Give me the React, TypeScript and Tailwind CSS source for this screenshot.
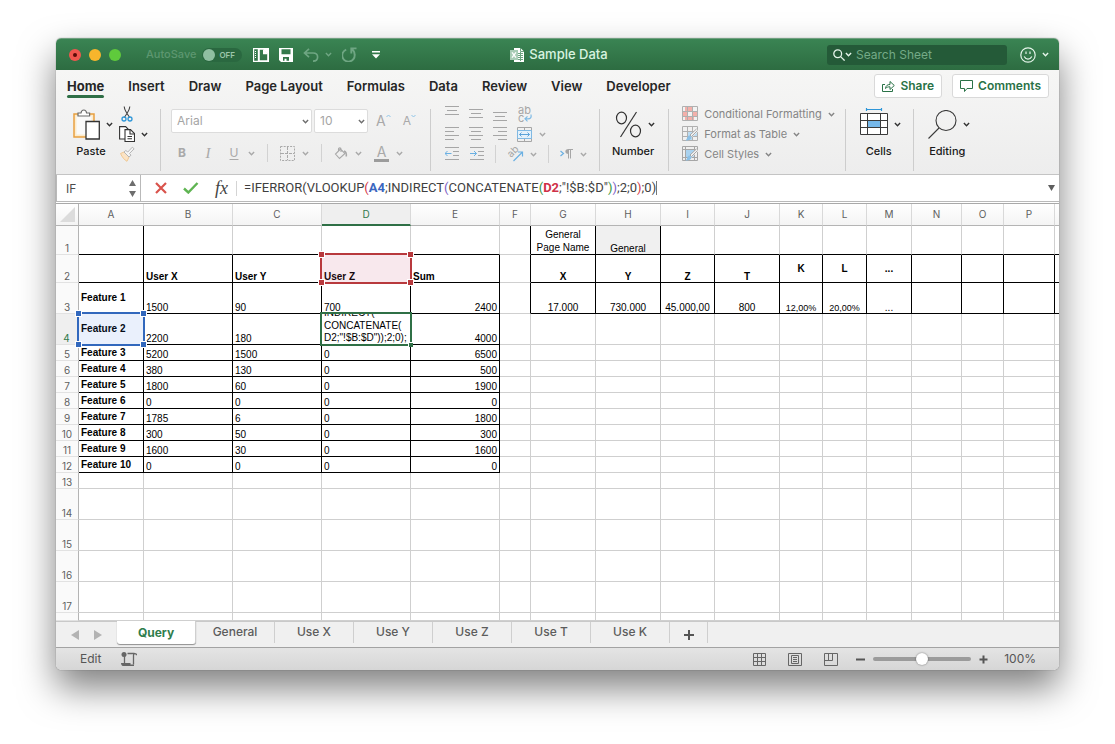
import React, { useState } from "react";

type CellData = {
  text?: string;
  bold?: boolean;
  align?: "left" | "center" | "right";
  valign?: "middle" | "bottom";
  small?: boolean;
  shaded?: boolean;
  wrap?: boolean;
};

const COLUMNS = [
  { name: "A", width: "w-[65px]" },
  { name: "B", width: "w-[89px]" },
  { name: "C", width: "w-[89px]" },
  { name: "D", width: "w-[89px]" },
  { name: "E", width: "w-[89px]" },
  { name: "F", width: "w-[31px]" },
  { name: "G", width: "w-[65px]" },
  { name: "H", width: "w-[65px]" },
  { name: "I", width: "w-[54px]" },
  { name: "J", width: "w-[65px]" },
  { name: "K", width: "w-[43px]" },
  { name: "L", width: "w-[44px]" },
  { name: "M", width: "w-[45px]" },
  { name: "N", width: "w-[50px]" },
  { name: "O", width: "w-[42px]" },
  { name: "P", width: "w-[51px]" },
  { name: "", width: "w-auto" },
];

const LAST_COL = COLUMNS.length - 1;

const ROW_HEIGHTS: Record<number, string> = {
  1: "h-[29px]",
  2: "h-7",
  3: "h-[31px]",
  4: "h-[31px]",
  14: "h-[31px]",
  15: "h-[31px]",
  16: "h-[31px]",
  17: "h-[31px]",
  18: "h-2",
};

const FEATURES: [string, string, string, string, string][] = [
  ["Feature 1", "1500", "90", "700", "2400"],
  ["Feature 2", "2200", "180", "", "4000"],
  ["Feature 3", "5200", "1500", "0", "6500"],
  ["Feature 4", "380", "130", "0", "500"],
  ["Feature 5", "1800", "60", "0", "1900"],
  ["Feature 6", "0", "0", "0", "0"],
  ["Feature 7", "1785", "6", "0", "1800"],
  ["Feature 8", "300", "50", "0", "300"],
  ["Feature 9", "1600", "30", "0", "1600"],
  ["Feature 10", "0", "0", "0", "0"],
];

const CELLS: Record<string, CellData> = {
  G1: { text: "General Page Name", align: "center", wrap: true },
  H1: { text: "General", align: "center", shaded: true },
  B2: { text: "User X", bold: true },
  C2: { text: "User Y", bold: true },
  D2: { text: "User Z", bold: true },
  E2: { text: "Sum", bold: true },
  G2: { text: "X", bold: true, align: "center" },
  H2: { text: "Y", bold: true, align: "center" },
  I2: { text: "Z", bold: true, align: "center" },
  J2: { text: "T", bold: true, align: "center" },
  K2: { text: "K", bold: true, align: "center", valign: "middle" },
  L2: { text: "L", bold: true, align: "center", valign: "middle" },
  M2: { text: "...", bold: true, align: "center", valign: "middle" },
  G3: { text: "17.000", align: "center" },
  H3: { text: "730.000", align: "center" },
  I3: { text: "45.000,00", align: "center" },
  J3: { text: "800", align: "center" },
  K3: { text: "12,00%", align: "center", small: true },
  L3: { text: "20,00%", align: "center", small: true },
  M3: { text: "...", align: "center" },
};

FEATURES.forEach(([name, x, y, z, sum], i) => {
  const row = i + 3;
  CELLS[`A${row}`] = { text: name, bold: true, valign: "middle" };
  CELLS[`B${row}`] = { text: x };
  CELLS[`C${row}`] = { text: y };
  CELLS[`D${row}`] = { text: z };
  CELLS[`E${row}`] = { text: sum, align: "right" };
});

function rightBorder(col: number, row: number) {
  if (row === 1) return col === 0 || (col >= 5 && col <= 7);
  if (row === 2 || row === 3) return true;
  return row <= 12 && col <= 4;
}

function bottomBorder(col: number, row: number) {
  if (row > 12) return false;
  if (col <= 4) return true;
  return col >= 6 && row <= 3;
}

function Chevron({ className = "" }: { className?: string }) {
  return (
    <svg viewBox="0 0 7 5" className={`h-[5px] w-[7px] shrink-0 ${className}`} fill="none" stroke="currentColor" strokeWidth="1.4" aria-hidden="true">
      <path d="M.9 .9 3.5 3.7 6.1 .9" />
    </svg>
  );
}

function Divider() {
  return <span className="mt-[7px] h-[62px] w-px shrink-0 bg-[#cdcdcd]" />;
}

function SmallDivider() {
  return <span className="h-[18px] w-px shrink-0 bg-[#d2d2d2]" />;
}

function BigButton({ label, children }: { label: string; children: React.ReactNode }) {
  return (
    <button type="button" className="flex flex-col items-center text-[#333]">
      <span className="flex h-10 items-center gap-[6px]">
        {children}
        <Chevron />
      </span>
      <span className="pr-1 text-[11px] leading-[14px] font-medium text-[#1a1a1a]">{label}</span>
    </button>
  );
}

function Tool({ label, chevron, children }: { label: string; chevron?: boolean; children: React.ReactNode }) {
  return (
    <button type="button" aria-label={label} className="flex items-center gap-[7px] text-[#a9a9a9]">
      {children}
      {chevron && <Chevron />}
    </button>
  );
}

function Lines({ d }: { d: string }) {
  return (
    <svg viewBox="0 0 14 18" className="h-[18px] w-[14px]" fill="none" stroke="#a6a6a6" aria-hidden="true">
      <path d={d} />
    </svg>
  );
}

function TitleBar() {
  return (
    <header className="flex h-8 items-center rounded-t-[5px] border-t border-[#6f9f7f] bg-linear-to-b from-[#3a8453] to-[#2d6c41] text-white">
      <div className="flex flex-1 items-center pl-[13px]">
        <div className="flex gap-2">
          <button type="button" aria-label="Close" className="flex size-3 items-center justify-center rounded-full bg-[#f0564e]">
            <span className="size-1 rounded-full bg-[#5c0a06]" />
          </button>
          <button type="button" aria-label="Minimize" className="size-3 rounded-full bg-[#f8b52c]" />
          <button type="button" aria-label="Zoom" className="size-3 rounded-full bg-[#5fca3c]" />
        </div>
        <span className="ml-[25px] text-[11px] font-medium text-[#5d9770]">AutoSave</span>
        <button type="button" role="switch" aria-checked="false" aria-label="AutoSave" className="ml-[6px] flex h-[14px] w-10 items-center gap-1 rounded-full bg-[#2a6840] pl-px">
          <span className="size-3 rounded-full bg-[#8fbfa1]" />
          <span className="text-[8px] font-semibold text-[#9cc7ab]">OFF</span>
        </button>
        <div className="ml-[11px] flex items-center gap-[10px]">
          <button type="button" aria-label="Workbook gallery">
            <svg viewBox="0 0 16 14" className="h-[14px] w-4" aria-hidden="true">
              <path fill="#fff" fillRule="evenodd" d="M0 0h16v14H0zM1.200 1.300v11.400h3.600V1.300zM6.800 1.800v10.400h7.400V5.200L10.800 1.800z" />
              <path stroke="#fff" d="M2 3.500h1M2 5.500h1M2 7.500h1M2 9.500h1" />
              <path fill="#fff" d="M10 1.500h1.200L14.500 5v1.200H10z" />
            </svg>
          </button>
          <button type="button" aria-label="Save">
            <svg viewBox="0 0 14 14" className="size-[14px]" aria-hidden="true">
              <path fill="#fff" fillRule="evenodd" d="M0 0h14v14H2L0 12zM2.500 1.300v5h9v-5zM4 9v3.700h1.500v-2h2v2H10V9z" />
            </svg>
          </button>
          <button type="button" aria-label="Undo" className="flex items-center gap-[6px] text-[#6fa683]">
            <svg viewBox="0 0 16 14" className="h-[14px] w-4" fill="none" stroke="currentColor" strokeWidth="1.700" aria-hidden="true">
              <path d="M6 .8 1.500 5 6 9.200M1.700 5H10c2.700 0 4.600 1.600 4.600 4 0 2.200-1.700 4.100-4.600 4.100" />
            </svg>
            <Chevron />
          </button>
          <button type="button" aria-label="Redo" className="text-[#6fa683]">
            <svg viewBox="0 0 16 15" className="h-[15px] w-4" fill="none" stroke="currentColor" strokeWidth="1.900" aria-hidden="true">
              <path d="M4.200 2.600A6.200 6.200 0 1 0 12.600 7.500C12.600 5.300 11.600 3.300 9.700 2M9.300 6.500V1.400H14.500" />
            </svg>
          </button>
          <button type="button" aria-label="Customize toolbar" className="pl-1">
            <svg viewBox="0 0 8 8" className="size-2" fill="#fff" aria-hidden="true">
              <path d="M0 0h8v1.400H0zM0 3.200h8L4 7.500z" />
            </svg>
          </button>
        </div>
      </div>
      <h1 className="flex items-center gap-[5px] text-[13px] font-medium text-[#d8f3e0]">
        <svg viewBox="0 0 14 14" className="size-[14px]" aria-hidden="true">
          <path fill="#fff" d="M4 0h6.500L14 3.500V14H4z" />
          <path stroke="#6da581" fill="none" d="M8 5.500h5M8 7.500h5M8 9.500h5M8 11.500h5M10.500 4v9M10.500 0v3.500H14" />
          <path fill="#a9cdb6" d="M0 2h8v10H0z" />
          <path stroke="#fff" strokeWidth="1.300" fill="none" d="m2 4.300 4 5.400M6 4.300 2 9.700" />
        </svg>
        Sample Data
      </h1>
      <div className="flex flex-1 items-center justify-end gap-[13px] pr-[10px]">
        <label className="flex h-5 w-[180px] items-center gap-1 rounded-[3px] bg-[#245a38] pl-[6px]">
          <svg viewBox="0 0 12 12" className="size-3" fill="none" stroke="#e4f4e9" strokeWidth="1.300" aria-hidden="true">
            <circle cx="4.700" cy="4.700" r="3.900" />
            <path d="m7.600 7.600 4 4" />
          </svg>
          <Chevron className="-ml-1 size-[5px] text-[#e4f4e9]" />
          <input type="text" aria-label="Search Sheet" placeholder="Search Sheet" className="min-w-0 flex-1 bg-transparent text-[12px] text-white outline-none placeholder:text-[#74aa87]" />
        </label>
        <button type="button" aria-label="Feedback" className="flex items-center gap-[6px] text-[#e4f4e9]">
          <svg viewBox="0 0 16 16" className="size-4" fill="none" stroke="currentColor" strokeWidth="1.200" aria-hidden="true">
            <circle cx="8" cy="8" r="7.200" />
            <path d="M4.200 9.500c1.700 3.400 5.900 3.400 7.600 0M6 4.500v2.500M10 4.500v2.500" />
          </svg>
          <Chevron />
        </button>
      </div>
    </header>
  );
}

const MENUS = ["Home", "Insert", "Draw", "Page Layout", "Formulas", "Data", "Review", "View", "Developer"];

function MenuRow() {
  const [active, setActive] = useState("Home");
  return (
    <nav className="flex h-8 items-center justify-between pr-[10px] pl-[11px]">
      <div className="flex h-full items-center gap-6">
        {MENUS.map((m) => (
          <button
            key={m}
            type="button"
            onClick={() => setActive(m)}
            className={`relative text-[13px] leading-8 text-[#262626] ${m === active ? "font-bold" : "font-semibold"}`}
          >
            {m}
            {m === active && <span className="absolute inset-x-0 bottom-1 h-[3px] rounded-full bg-[#2f6f46]" />}
          </button>
        ))}
      </div>
      <div className="flex gap-[10px] text-[12px] font-semibold text-[#2a7247]">
        <button type="button" className="flex h-6 items-center gap-[5px] rounded-[3px] border border-[#d9d9d9] bg-white px-[7px]">
          <svg viewBox="0 0 13 12" className="h-3 w-[13px]" fill="none" stroke="currentColor" aria-hidden="true">
            <path d="M3 4.500H.5v7h10V9M3.500 8.500c.3-2.700 1.800-4 4.500-4v-3l4.300 4-4.300 4V6.800c-2 0-3.300.4-4.500 1.700z" />
          </svg>
          Share
        </button>
        <button type="button" className="flex h-6 items-center gap-[5px] rounded-[3px] border border-[#d9d9d9] bg-white px-[7px]">
          <svg viewBox="0 0 13 12" className="h-3 w-[13px]" fill="none" stroke="currentColor" aria-hidden="true">
            <path d="M.5 .5h12v8H7l-2.500 3v-3h-4z" />
          </svg>
          Comments
        </button>
      </div>
    </nav>
  );
}

function StyleIcon({ kind }: { kind: "conditional" | "table" | "cell" }) {
  return (
    <svg viewBox="0 0 16 16" className="size-4" fill="none" aria-hidden="true">
      {kind === "conditional" && <path fill="#f3b0aa" d="M3 1h7v4H3zM1 6h5v4H1zM10 6h5v4h-5zM3 11h9v4H3z" />}
      {kind === "table" && <path fill="#bcdcf2" d="M6 6h9v4H6zM6 10h5v5H6z" />}
      {kind === "cell" && <path fill="#a9d2ef" d="M3 4h10v8H3z" />}
      {kind === "cell" ? (
        <path stroke="#a6a6a6" d="M.5 .5h15v14H.5zM3.500 .5v14M12.500 .5v14M.5 3.500h15M.5 11.500h15" />
      ) : (
        <path stroke="#b0b0b0" d="M.5 .5h15v14H.5zM5.500 .5v14M10.500 .5v14M.5 5.500h15M.5 10.500h15" />
      )}
      {kind !== "conditional" && (
        <>
          <path stroke="#f1f1f1" strokeWidth="3" d="M15.500 4 8 11" />
          <path fill="#f4f4f4" stroke="#9e9e9e" strokeWidth=".9" d="m15.500 4.500-6 6-1.500-1.500 6.500-6" />
          <path fill="#8cc0e6" d="M7.800 9.300 9.600 11c-.4 2.700-2.500 3.700-6 3.500C5.300 13.200 5.100 9.600 7.800 9.300z" />
        </>
      )}
    </svg>
  );
}

function Ribbon() {
  return (
    <div className="flex h-[72px] items-start pl-[3px]">
      <div className="flex w-[101px] pt-[2px] pl-[14px]">
        <BigButton label="Paste">
          <svg viewBox="0 0 27 31" className="h-[31px] w-[27px]" fill="none" aria-hidden="true">
            <path fill="#fdeccd" stroke="#e8a040" strokeWidth="1.500" d="M1 5h20v23H1z" />
            <path fill="#fafafa" d="M3.500 7h15v18.500h-15z" />
            <path fill="#fff" stroke="#6b6b6b" strokeWidth="1.200" d="M5 7V4h3c.3-2 1.300-3 2.800-3s2.500 1 2.800 3h3v3z" />
            <path fill="#fff" stroke="#333" strokeWidth="1.300" d="M13 12.500h13.300v17.500H13z" />
          </svg>
        </BigButton>
        <div className="ml-[6px] flex flex-col text-[#333]">
          <button type="button" aria-label="Cut" className="flex h-5 items-center">
            <svg viewBox="0 0 16 16" className="size-4" fill="none" aria-hidden="true">
              <path stroke="#444" strokeWidth="1.100" d="M5.200 .5c.2 3 1.500 5.500 5.500 11M10.800 .5c-.2 3-1.500 5.500-5.500 11" />
              <circle cx="5" cy="13" r="2" stroke="#2e96d8" strokeWidth="1.300" />
              <circle cx="11" cy="13" r="2" stroke="#2e96d8" strokeWidth="1.300" />
            </svg>
          </button>
          <button type="button" aria-label="Copy" className="flex h-5 items-center gap-[6px]">
            <svg viewBox="0 0 16 16" className="size-4" fill="#fff" stroke="#333" strokeWidth="1.100" aria-hidden="true">
              <path d="M6 13H.6V.6h6L9 3v2" />
              <path d="M6 3.600h5.500l4 3.900v8H6z" />
              <path fill="none" d="M11 4v4h4M8.500 10.500h4.500M8.500 12.700h4.500" />
            </svg>
            <Chevron />
          </button>
          <button type="button" aria-label="Format painter" className="flex h-5 items-center">
            <svg viewBox="0 0 16 16" className="size-4" aria-hidden="true">
              <path fill="#fbe3c4" stroke="#efc893" d="M1.500 7.500 5 6l5 5-2 4.300C5.500 14 3 11 1.500 7.500z" />
              <path fill="#f5f5f5" stroke="#b5b5b5" d="m5 6 1.800-1.500 2 1.500 4.500-4.800 1.800 1.600L10.500 7.500l1.500 1.700L10 11z" />
            </svg>
          </button>
        </div>
      </div>
      <Divider />

      <div className="flex w-[269px] flex-col gap-[10px] pt-[7px] pl-[10px]">
        <div className="flex items-center gap-[2px]">
          <div className="relative flex">
            <select aria-label="Font" className="h-6 w-[141px] appearance-none rounded-[2px] border border-[#dcdcdc] bg-white pl-[5px] text-[12px] text-[#a5a5a5]">
              <option>Arial</option>
            </select>
            <Chevron className="pointer-events-none absolute top-[10px] right-[3px] text-[#6e6e6e]" />
          </div>
          <div className="relative flex">
            <select aria-label="Font size" className="h-6 w-[54px] appearance-none rounded-[2px] border border-[#dcdcdc] bg-white pl-[5px] text-[12px] text-[#a5a5a5]">
              <option>10</option>
            </select>
            <Chevron className="pointer-events-none absolute top-[10px] right-[3px] text-[#6e6e6e]" />
          </div>
          <div className="flex gap-3 pl-[6px]">
            <button type="button" aria-label="Increase font size" className="flex text-[14px] leading-5 text-[#a9a9a9]">
              A
              <svg viewBox="0 0 5 4" className="mt-[3px] h-1 w-[5px]" fill="none" stroke="#8ec5e8" aria-hidden="true">
                <path d="M.5 3 2.500 1l2 2" />
              </svg>
            </button>
            <button type="button" aria-label="Decrease font size" className="flex text-[12px] leading-5 text-[#a9a9a9]">
              A
              <svg viewBox="0 0 5 4" className="mt-[3px] h-1 w-[5px]" fill="none" stroke="#8ec5e8" aria-hidden="true">
                <path d="M.5 1 2.500 3l2-2" />
              </svg>
            </button>
          </div>
        </div>
        <div className="flex h-5 items-center gap-3 pl-1">
          <Tool label="Bold">
            <span className="w-[14px] text-center text-[12px] font-bold">B</span>
          </Tool>
          <Tool label="Italic">
            <span className="w-[14px] text-center font-['Liberation_Serif',serif] text-[15px] italic">I</span>
          </Tool>
          <Tool label="Underline" chevron>
            <span className="w-[14px] text-center text-[12px] underline underline-offset-2">U</span>
          </Tool>
          <SmallDivider />
          <Tool label="Borders" chevron>
            <svg viewBox="0 0 15 15" className="size-[15px]" fill="none" stroke="currentColor" aria-hidden="true">
              <path strokeDasharray="2 1.200" d="M.5 .5h14v14H.5z" />
              <path strokeDasharray="3 1" d="M7.500 1v13M1 7.500h13" />
            </svg>
          </Tool>
          <SmallDivider />
          <Tool label="Fill color" chevron>
            <svg viewBox="0 0 14 13" className="h-[13px] w-[14px]" fill="none" stroke="currentColor" strokeWidth="1.100" aria-hidden="true">
              <path d="M6.500 2 1.500 7l4 4.500 5.500-5L6.500 2zM4.500 5V2c0-1.500 2.500-1.500 2.500 0v3" />
              <path strokeWidth="1.600" d="M10 4c2 .5 2.600 2.500 2.300 5.500" />
            </svg>
          </Tool>
          <Tool label="Font color" chevron>
            <span className="flex w-[15px] flex-col items-center text-[14px] leading-[14px]">
              A
              <span className="h-[3px] w-[15px] bg-[#9c9c9c]" />
            </span>
          </Tool>
        </div>
      </div>
      <Divider />

      <div className="flex w-[168px] flex-col pt-[2px] pl-[14px]">
        <div className="flex h-5 items-center gap-[10px]">
          <Tool label="Align top"><Lines d="M0 1.500h14M2 5.500h10M0 9.500h14" /></Tool>
          <Tool label="Align middle"><Lines d="M0 4.500h14M2 8.500h10M0 12.500h14" /></Tool>
          <Tool label="Align bottom"><Lines d="M0 7.500h14M2 11.500h10M0 15.500h14" /></Tool>
          <Tool label="Wrap text">
            <svg viewBox="0 0 16 18" className="h-[18px] w-4 overflow-visible" fill="none" aria-hidden="true">
              <text x="1" y="9" fontSize="11" fill="#a6a6a6">ab</text>
              <text x="1" y="17" fontSize="11" fill="#a6a6a6">c</text>
              <path stroke="#7fbbe5" strokeWidth="1.200" d="M14 9.500c.6 3-.6 4.300-3 4.300H8M10.500 11.300 8 13.800l2.500 2.500" />
            </svg>
          </Tool>
        </div>
        <div className="flex h-5 items-center gap-[10px]">
          <Tool label="Align left"><Lines d="M0 2.500h14M0 6.500h9M0 10.500h14M0 14.500h9" /></Tool>
          <Tool label="Center"><Lines d="M0 2.500h14M2 6.500h10M0 10.500h14M2 14.500h10" /></Tool>
          <Tool label="Align right"><Lines d="M0 2.500h14M5 6.500h9M0 10.500h14M5 14.500h9" /></Tool>
          <Tool label="Merge" chevron>
            <svg viewBox="0 0 15 15" className="size-[15px]" fill="none" aria-hidden="true">
              <path stroke="#a6a6a6" d="M.5 .5h14v14H.5zM7.500 0v3M7.500 12v3" />
              <path fill="#e3f1fb" stroke="#7fb9e4" d="M.5 3.500h14v8H.5z" />
              <path stroke="#5ba3da" d="M2.500 7.500h10M4.500 5.500l-2 2 2 2M10.500 5.500l2 2-2 2" />
            </svg>
          </Tool>
        </div>
        <div className="flex h-5 items-center gap-[11px]">
          <Tool label="Decrease indent">
            <svg viewBox="0 0 14 14" className="size-[14px]" fill="none" stroke="#a6a6a6" aria-hidden="true">
              <path d="M0 .5h14M8 4.500h6M8 8.500h6M0 12.500h14" />
              <path stroke="#6bb0e2" d="M0 6.500h6.500M2.500 4 0 6.500 2.500 9" />
            </svg>
          </Tool>
          <Tool label="Increase indent">
            <svg viewBox="0 0 14 14" className="size-[14px]" fill="none" stroke="#a6a6a6" aria-hidden="true">
              <path d="M0 .5h14M8 4.500h6M8 8.500h6M0 12.500h14" />
              <path stroke="#6bb0e2" d="M0 6.500h6.500M4 4l2.500 2.500L4 9" />
            </svg>
          </Tool>
          <SmallDivider />
          <Tool label="Orientation" chevron>
            <svg viewBox="0 0 16 16" className="size-4 overflow-visible" fill="none" aria-hidden="true">
              <text x="0" y="0" fontSize="10" fill="#a6a6a6" transform="translate(4 12) rotate(-45)">ab</text>
              <path stroke="#6bb0e2" strokeWidth="1.200" d="M6.500 15 15.500 6M11 6h4.500V10.500" />
            </svg>
          </Tool>
          <SmallDivider />
          <Tool label="Text direction" chevron>
            <svg viewBox="0 0 13 10" className="h-[10px] w-[13px]" fill="none" aria-hidden="true">
              <path stroke="#6bb0e2" strokeWidth="1.200" d="m.5 2 3 2.500-3 2.500" />
              <path fill="#a6a6a6" d="M8.500 0v5C4.300 5 4.300 0 8.500 0z" />
              <path stroke="#a6a6a6" d="M8.500 .5v9M10.500 .5v9M8 .5h5" />
            </svg>
          </Tool>
        </div>
      </div>
      <Divider />

      <div className="flex pt-[2px] pr-[10px] pl-3">
        <BigButton label="Number">
          <svg viewBox="0 0 27 27" className="size-[27px]" fill="none" stroke="#333" strokeWidth="1.200" aria-hidden="true">
            <ellipse cx="6.500" cy="7" rx="5" ry="5.800" />
            <ellipse cx="20.500" cy="20" rx="5" ry="5.800" />
            <path d="M21.500 1 5.500 26" />
          </svg>
        </BigButton>
      </div>
      <Divider />

      <div className="flex w-[176px] flex-col pt-[2px] pl-[13px] text-[11px] text-[#858585]">
        <button type="button" className="flex h-5 items-center gap-[6px]">
          <StyleIcon kind="conditional" />
          Conditional Formatting
          <Chevron />
        </button>
        <button type="button" className="flex h-5 items-center gap-[6px]">
          <StyleIcon kind="table" />
          Format as Table
          <Chevron />
        </button>
        <button type="button" className="flex h-5 items-center gap-[6px]">
          <StyleIcon kind="cell" />
          Cell Styles
          <Chevron />
        </button>
      </div>
      <Divider />

      <div className="flex pt-[2px] pr-3 pl-[14px]">
        <BigButton label="Cells">
          <svg viewBox="0 0 28 28" className="mb-1 size-7" fill="none" aria-hidden="true">
            <path fill="#fff" stroke="#3a3a3a" d="M.5 5.500h27v21H.5z" />
            <path fill="#76b8ea" d="M7.500 12.500h13v7h-13z" />
            <path stroke="#3a3a3a" d="M7.500 5.500v21M20.500 5.500v21M.5 12.500h27M.5 19.500h27" />
            <path stroke="#2e96d8" strokeWidth="1.200" d="M6.500 0v3M21.500 0v3M6.500 1.500h15" />
          </svg>
        </BigButton>
      </div>
      <Divider />

      <div className="flex pt-[2px] pl-[14px]">
        <BigButton label="Editing">
          <svg viewBox="0 0 29 29" className="size-[29px]" fill="none" stroke="#3a3a3a" strokeWidth="1.100" aria-hidden="true">
            <circle cx="18" cy="10.500" r="10" />
            <path d="M11 18 .5 28.500" />
          </svg>
        </BigButton>
      </div>
    </div>
  );
}

function FormulaBar() {
  return (
    <div className="flex h-[30px] items-stretch border-t border-b border-t-[#c4c4c4] border-b-[#a9a9a9] bg-white pb-px">
      <div className="flex w-[85px] items-center border-x border-b border-[#b9b9b9] pr-1 pl-[9px]">
        <input type="text" aria-label="Name box" defaultValue="IF" className="w-0 min-w-0 flex-1 pt-[2px] text-[12px] text-[#4c4c4c] outline-none" />
        <svg viewBox="0 0 7 17" className="h-[17px] w-[7px]" fill="#6e6e6e" aria-hidden="true">
          <path d="M3.500 0 7 6H0zM3.500 17 7 11H0z" />
        </svg>
      </div>
      <div className="flex flex-1 items-center border-b border-[#b9b9b9] pr-1 pl-[14px]">
        <div className="flex items-center gap-4">
          <button type="button" aria-label="Cancel">
            <svg viewBox="0 0 12 12" className="size-3" stroke="#d9534c" strokeWidth="2.200" aria-hidden="true">
              <path d="m1 1 10 10M11 1 1 11" />
            </svg>
          </button>
          <button type="button" aria-label="Enter">
            <svg viewBox="0 0 16 12" className="h-3 w-4" fill="none" stroke="#5fb452" strokeWidth="2.400" aria-hidden="true">
              <path d="m1 6.500 4.300 4L14.500 1" />
            </svg>
          </button>
          <button type="button" aria-label="Insert function" className="font-['Liberation_Serif',serif] text-[18px] leading-5 text-[#444] italic">
            fx
          </button>
        </div>
        <span className="mr-[7px] ml-2 h-[15px] w-px bg-[#d4d4d4]" />
        <div
          role="textbox"
          aria-label="Formula"
          contentEditable
          suppressContentEditableWarning
          className="flex flex-1 items-center font-['Roboto','Liberation_Sans',sans-serif] text-[13px] leading-5 whitespace-nowrap text-[#3f3f3f] outline-none"
        >
          <span>
            =IFERROR(VLOOKUP<span className="text-[#d4343f]">(</span>
            <span className="font-bold text-[#3a66c0]">A4</span>;INDIRECT<span className="text-[#7b5cc4]">(</span>CONCATENATE
            <span className="text-[#35933e]">(</span>
            <span className="font-bold text-[#cf3148]">D2</span>;"!$B:$D"<span className="text-[#35933e]">)</span>
            <span className="text-[#7b5cc4]">)</span>;2;0<span className="text-[#d4343f]">)</span>;0)
          </span>
          <span className="h-[14px] w-px bg-[#777]" />
        </div>
        <button type="button" aria-label="Expand formula bar">
          <svg viewBox="0 0 7 6" className="h-[6px] w-[7px]" fill="#5e5e5e" aria-hidden="true">
            <path d="M0 0h7L3.500 6z" />
          </svg>
        </button>
      </div>
    </div>
  );
}

function Handles({ color }: { color: "red" | "blue" }) {
  const fill = color === "red" ? "bg-[#b8393d]" : "bg-[#3268bd]";
  return (
    <>
      <span className={`absolute -top-1 -left-1 size-[7px] border border-white ${fill}`} />
      <span className={`absolute -top-1 -right-1 size-[7px] border border-white ${fill}`} />
      <span className={`absolute -bottom-1 -left-1 size-[7px] border border-white ${fill}`} />
      <span className={`absolute -right-1 -bottom-1 size-[7px] border border-white ${fill}`} />
    </>
  );
}

function Cell({ col, row }: { col: number; row: number }) {
  const id = `${COLUMNS[col].name}${row}`;
  const data = CELLS[id] ?? {};
  const align = data.align === "center" ? "text-center" : data.align === "right" ? "text-right" : "text-left";
  return (
    <td
      className={[
        "relative overflow-visible border-b p-0 px-[2px] text-black",
        data.wrap ? "leading-[13px]" : "leading-[10px]",
        col === LAST_COL ? "" : "border-r",
        align,
        data.valign === "middle" ? "align-middle" : "align-bottom",
        data.bold ? "font-bold" : "font-normal",
        data.small ? "text-[9px]" : "text-[10px]",
        data.shaded ? "bg-[#f0f0f0]" : "",
        rightBorder(col, row) ? "border-r-black" : "border-r-[#cfcfcf]",
        bottomBorder(col, row) ? "border-b-black" : "border-b-[#cfcfcf]",
      ].join(" ")}
    >
      {id === "D2" && (
        <span className="absolute -inset-[2px] z-20 border-2 border-[#b8393d] bg-[#c8416a]/12">
          <Handles color="red" />
        </span>
      )}
      {id === "A4" && (
        <span className="absolute -inset-[2px] z-20 border-2 border-[#3268bd] bg-[#3268dd]/10">
          <Handles color="blue" />
        </span>
      )}
      {id === "D4" && (
        <span className="absolute -inset-[2px] z-10 border-2 border-[#2f7046] bg-white">
          <span className="flex h-full w-full flex-col justify-end overflow-hidden pl-[2px] leading-[13px] whitespace-nowrap">
            <span>INDIRECT(</span>
            <span>CONCATENATE(</span>
            <span className="leading-3">D2;"!$B:$D"));2;0);</span>
          </span>
          <span className="absolute -right-[3px] -bottom-[3px] size-[5px] border-t border-l border-white bg-[#2f7046]" />
        </span>
      )}
      {data.text}
    </td>
  );
}

function Grid() {
  const rows = Array.from({ length: 18 }, (_, i) => i + 1);
  return (
    <table className="w-full table-fixed border-separate border-spacing-0 bg-white font-['Liberation_Sans',Arial,sans-serif]">
      <thead>
        <tr className="h-[22px] bg-linear-to-b from-white to-[#f4f4f4] font-['Inter',sans-serif] text-[10px] text-[#5f5f5f]">
          <th className="w-[23px] border-r border-b border-r-[#b4b4b4] border-b-[#b4b4b4] p-0">
            <svg viewBox="0 0 16 16" className="mx-auto size-[15px]" fill="#dcdcdc" aria-label="Select all">
              <path d="M16 0v16H0z" />
            </svg>
          </th>
          {COLUMNS.map((c, i) => (
            <th
              key={i}
              scope="col"
              className={`${c.width} h-[22px] border-r-[#d9d9d9] p-0 font-normal ${i === LAST_COL ? "" : "border-r"} ${
                c.name === "D" ? "border-b-2 border-b-[#2f7046] bg-[#efefef] text-[#2f7a4b]" : "border-b border-b-[#b4b4b4]"
              }`}
            >
              {c.name}
            </th>
          ))}
        </tr>
      </thead>
      <tbody>
        {rows.map((r) => (
          <tr key={r} className={ROW_HEIGHTS[r] ?? "h-4"}>
            <th
              scope="row"
              className={`border-r border-b border-b-[#e2e2e2] p-0 text-center align-bottom font-['Inter',sans-serif] text-[10px] leading-3 font-normal ${
                r === 4 ? "border-r-2 border-r-[#2f7046] bg-[#efefef] text-[#2f7a4b]" : "border-r-[#b4b4b4] bg-[#fafafa] text-[#5f5f5f]"
              }`}
            >
              {r < 18 ? r : <span className="block h-1" />}
            </th>
            {COLUMNS.map((_, c) => (
              <Cell key={c} col={c} row={r} />
            ))}
          </tr>
        ))}
      </tbody>
    </table>
  );
}

const SHEETS = ["Query", "General", "Use X", "Use Y", "Use Z", "Use T", "Use K"];

function SheetTabs() {
  const [active, setActive] = useState("Query");
  return (
    <div className="flex h-[26px] items-start border-t border-[#c9c9c9] bg-[#f0f0f0] text-[12px] text-[#5c5c5c]">
      <div className="flex h-[26px] w-[61px] items-center gap-[15px] pl-[15px]">
        <button type="button" aria-label="Previous sheet">
          <svg viewBox="0 0 8 10" className="h-[10px] w-2" fill="#b3b3b3" aria-hidden="true"><path d="M8 0v10L0 5z" /></svg>
        </button>
        <button type="button" aria-label="Next sheet">
          <svg viewBox="0 0 8 10" className="h-[10px] w-2" fill="#b3b3b3" aria-hidden="true"><path d="M0 0v10l8-5z" /></svg>
        </button>
      </div>
      {SHEETS.map((s) => (
        <button
          key={s}
          type="button"
          onClick={() => setActive(s)}
          className={`w-[79px] border-r border-[#cfcfcf] leading-[18px] ${
            s === active ? "-mt-px h-[23px] rounded-b-[3px] bg-white font-bold text-[#2f7d4c] shadow-[0_1px_1px_rgba(0,0,0,0.4)]" : "h-[21px] pb-px font-medium"
          }`}
        >
          {s}
        </button>
      ))}
      <button type="button" aria-label="Add sheet" className="flex h-[21px] w-[38px] items-center justify-center border-r border-[#cfcfcf] pt-1">
        <svg viewBox="0 0 10 10" className="size-[10px]" stroke="#555" strokeWidth="2" aria-hidden="true"><path d="M5 0v10M0 5h10" /></svg>
      </button>
    </div>
  );
}

function StatusBar() {
  return (
    <footer className="flex h-[23px] items-center justify-between rounded-b-[5px] border-t border-[#a3a3a3] bg-linear-to-b from-[#e4e4e4] to-[#d6d6d6] pr-[23px] pl-6 text-[12px] text-[#555]">
      <div className="flex items-center gap-5">
        <span>Edit</span>
        <button type="button" aria-label="Record macro">
          <svg viewBox="0 0 16 14" className="h-[14px] w-4" fill="none" stroke="#666" strokeWidth="1.300" aria-hidden="true">
            <path d="M6.500 1.500h7M15.500 3.200c0-2-3-2-3 0v9.300M3.500 4v8.500" />
            <circle cx="3" cy="2.600" r="2.500" fill="#666" stroke="none" />
            <path fill="#666" stroke="none" d="M0 11h9.500v1.500h3.500V14H2C.8 14 0 12.500 0 11z" />
          </svg>
        </button>
      </div>
      <div className="flex items-center">
        <div className="flex items-center gap-[22px]">
          <button type="button" aria-label="Normal view">
            <svg viewBox="0 0 13 13" className="size-[13px]" fill="none" stroke="#666" aria-hidden="true">
              <path d="M.5 .5h12v12H.5zM4.500 0v13M8.500 0v13M0 4.500h13M0 8.500h13" />
            </svg>
          </button>
          <button type="button" aria-label="Page layout view">
            <svg viewBox="0 0 14 13" className="h-[13px] w-[14px]" fill="none" stroke="#666" aria-hidden="true">
              <path d="M.5 .5h13v12H.5zM3.500 2.500h7v8h-7zM5 4.500h4M5 6.500h4M5 8.500h4" />
            </svg>
          </button>
          <button type="button" aria-label="Page break view">
            <svg viewBox="0 0 14 13" className="h-[13px] w-[14px]" fill="none" stroke="#666" aria-hidden="true">
              <path d="M.5 .5h13v12H.5zM.5 7.500h8v-7M4.500 .5v7" />
            </svg>
          </button>
        </div>
        <div className="ml-[18px] flex items-center gap-2">
          <button type="button" aria-label="Zoom out">
            <svg viewBox="0 0 9 9" className="size-[9px]" stroke="#555" strokeWidth="2" aria-hidden="true"><path d="M0 4.500h9" /></svg>
          </button>
          <input
            type="range"
            aria-label="Zoom"
            min={10}
            max={190}
            defaultValue={100}
            className="h-1 w-[98px] appearance-none rounded-full bg-[#9b9b9b] outline-none [&::-webkit-slider-thumb]:size-3 [&::-webkit-slider-thumb]:appearance-none [&::-webkit-slider-thumb]:rounded-full [&::-webkit-slider-thumb]:bg-white [&::-webkit-slider-thumb]:shadow-[0_0_2px_rgba(0,0,0,0.5)]"
          />
          <button type="button" aria-label="Zoom in">
            <svg viewBox="0 0 9 9" className="size-[9px]" stroke="#555" strokeWidth="2" aria-hidden="true"><path d="M4.500 .5v8M.5 4.500h8" /></svg>
          </button>
        </div>
        <span className="ml-4">100%</span>
      </div>
    </footer>
  );
}

export default function App() {
  return (
    <main className="min-h-screen bg-white px-14 pt-[38px] pb-[74px] font-['Inter','Liberation_Sans',sans-serif]">
      <div className="overflow-hidden rounded-[5px] shadow-[0_0_1px_rgba(0,0,0,0.6),0_18px_36px_rgba(0,0,0,0.5)]">
        <TitleBar />
        <div className="bg-linear-to-b from-[#f6f6f5] to-[#ededed]">
          <MenuRow />
          <Ribbon />
        </div>
        <FormulaBar />
        <Grid />
        <SheetTabs />
        <StatusBar />
      </div>
    </main>
  );
}
